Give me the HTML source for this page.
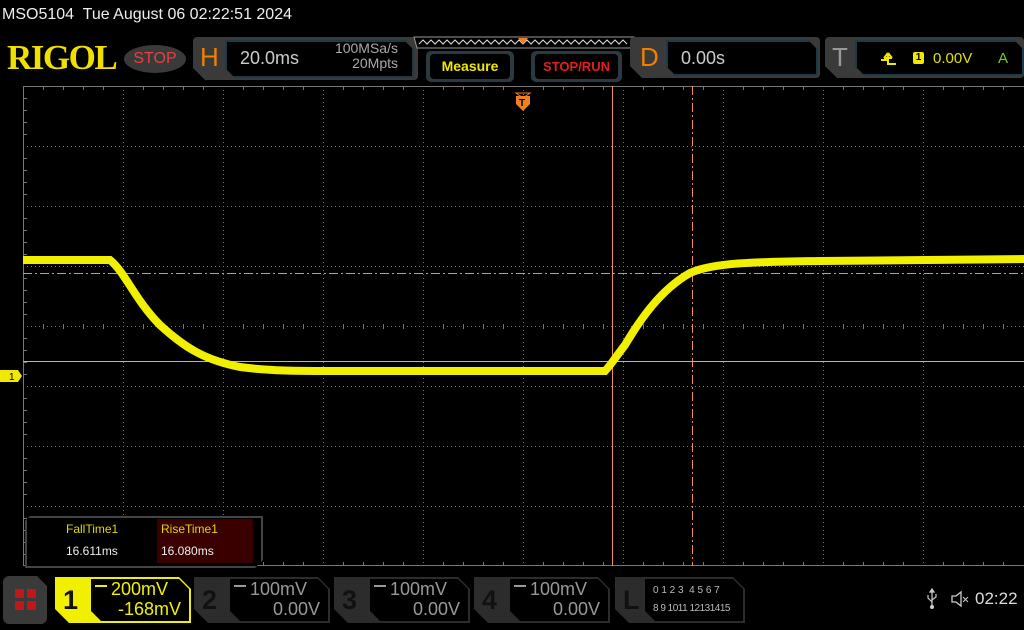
<!DOCTYPE html>
<html><head><meta charset="utf-8"><style>
body{margin:0;width:1024px;height:630px;background:#000;overflow:hidden;position:relative;font-family:"Liberation Sans","DejaVu Sans",sans-serif;color:#ddd}
.a{position:absolute}
.pan{position:absolute;background:#3a3a3a;border-radius:4px;clip-path:polygon(0 0,100% 0,100% 100%,12px 100%,0 calc(100% - 12px))}
.in{position:absolute;background:#000;border:2px solid #1d3a48;clip-path:polygon(8px 0,calc(100% - 10px) 0,100% 10px,100% 100%,10px 100%,0 calc(100% - 10px),0 0)}
.ch{position:absolute;top:577px;height:46px;width:136px;background:#2c2c2c;clip-path:polygon(0 0,calc(100% - 12px) 0,100% 12px,100% 100%,14px 100%,0 calc(100% - 14px))}
.ch .n{position:absolute;left:8px;top:8px;font-size:27px;color:#111;font-weight:bold}
.ch .b{position:absolute;left:36px;top:2px;right:2px;bottom:2px;background:#000;clip-path:polygon(0 0,calc(100% - 10px) 0,100% 10px,100% 100%,10px 100%,0 calc(100% - 10px))}
.ch .v1{position:absolute;left:36px;top:2px;font-size:18px;color:#999}
.ch .v2{position:absolute;right:10px;top:22px;font-size:18px;color:#999}
.ch .dc{position:absolute;left:4px;top:8px;width:12px;height:6px;border-top:2px solid #999}
</style></head><body>
<div class="a" style="left:2px;top:6px;font-size:16px;color:#eee">MSO5104&nbsp; Tue August 06 02:22:51 2024</div>
<div class="a" style="left:7px;top:38px;font-family:'Liberation Serif',serif;font-weight:bold;font-size:35px;color:#f0e000;letter-spacing:-1.5px">RIGOL</div>
<div class="a" style="left:124px;top:45px;width:62px;height:28px;border-radius:50%;background:#3a3a3a;color:#e84040;font-size:16px;text-align:center;line-height:28px">STOP</div>
<div class="pan" style="left:193px;top:37px;width:225px;height:43px"></div>
<div class="a" style="left:200px;top:42px;font-size:26px;color:#f08000">H</div>
<div class="in" style="left:225px;top:40px;width:185px;height:34px"></div>
<div class="a" style="left:240px;top:48px;font-size:18px;color:#ccc">20.0ms</div>
<div class="a" style="left:320px;top:41px;font-size:14px;color:#aaa;text-align:right;width:78px;line-height:15px">100MSa/s<br>20Mpts</div>
<svg class="a" style="left:413px;top:36px" width="222" height="14"><path d="M1 1H221L217 12H4Z" fill="#000" stroke="#999"/><path d="M6 8 L10 4 L14 8 L18 4 L22 8 L26 4 L30 8 L34 4 L38 8 L42 4 L46 8 L50 4 L54 8 L58 4 L62 8 L66 4 L70 8 L74 4 L78 8 L82 4 L86 8 L90 4 L94 8 L98 4 L102 8 L106 4 L110 8 L114 4 L118 8 L122 4 L126 8 L130 4 L134 8 L138 4 L142 8 L146 4 L150 8 L154 4 L158 8 L162 4 L166 8 L170 4 L174 8 L178 4 L182 8 L186 4 L190 8 L194 4 L198 8 L202 4 L206 8 L210 4 L214 8" fill="none" stroke="#ddd" stroke-width="1"/><path d="M105 2h10l-5 6z" fill="#f08020"/></svg>
<div class="a" style="left:426px;top:51px;width:88px;height:31px;background:#2a3a40;border-radius:5px"></div>
<div class="a" style="left:430px;top:54px;width:80px;height:25px;background:#000;border-radius:4px;color:#f0e800;font-weight:bold;font-size:14px;text-align:center;line-height:25px">Measure</div>
<div class="a" style="left:531px;top:51px;width:91px;height:31px;background:#2a3a40;border-radius:5px"></div>
<div class="a" style="left:535px;top:54px;width:83px;height:25px;background:#000;border-radius:4px;color:#e02020;font-weight:bold;font-size:13px;text-align:center;line-height:25px">STOP/RUN</div>
<div class="pan" style="left:630px;top:37px;width:190px;height:41px"></div>
<div class="a" style="left:640px;top:42px;font-size:26px;color:#f08000">D</div>
<div class="in" style="left:666px;top:40px;width:148px;height:32px"></div>
<div class="a" style="left:681px;top:48px;font-size:18px;color:#ccc">0.00s</div>
<div class="pan" style="left:825px;top:37px;width:199px;height:41px"></div>
<div class="a" style="left:832px;top:42px;font-size:26px;color:#999">T</div>
<div class="in" style="left:855px;top:40px;width:165px;height:32px"></div>
<svg class="a" style="left:880px;top:50px" width="18" height="16"><path d="M1 10H8V3M8 3L4 8M8 3L12 8M4 8H12M8 10V14H16" fill="none" stroke="#f0e800" stroke-width="2"/></svg>
<div class="a" style="left:913px;top:52px;width:11px;height:12px;background:#f0e800;border-radius:2px;color:#000;font-size:10px;text-align:center;line-height:12px;font-weight:bold">1</div>
<div class="a" style="left:933px;top:50px;font-size:15px;color:#e0e000">0.00V</div>
<div class="a" style="left:998px;top:50px;font-size:15px;color:#70d020">A</div>

<svg class="a" style="left:0;top:0" width="1024" height="630">
<g stroke="#777" stroke-width="1" fill="none" stroke-dasharray="1,3">
<path d="M123.5 86V566M223.5 86V566M323.5 86V566M423.5 86V566M523.5 86V566M623.5 86V566M723.5 86V566M823.5 86V566M923.5 86V566"/>
<path d="M23 146.5H1024M23 206.5H1024M23 266.5H1024M23 326.5H1024M23 386.5H1024M23 446.5H1024M23 506.5H1024"/>
</g>
<path d="M23.5 86V566M23 86.5H1024M23 565.5H1024" stroke="#777"/>
<g stroke="#777">
<path d="M43.5 324v5M63.5 324v5M83.5 324v5M103.5 324v5M143.5 324v5M163.5 324v5M183.5 324v5M203.5 324v5M243.5 324v5M263.5 324v5M283.5 324v5M303.5 324v5M343.5 324v5M363.5 324v5M383.5 324v5M403.5 324v5M443.5 324v5M463.5 324v5M483.5 324v5M503.5 324v5M543.5 324v5M563.5 324v5M583.5 324v5M603.5 324v5M643.5 324v5M663.5 324v5M683.5 324v5M703.5 324v5M743.5 324v5M763.5 324v5M783.5 324v5M803.5 324v5M843.5 324v5M863.5 324v5M883.5 324v5M903.5 324v5M943.5 324v5M963.5 324v5M983.5 324v5M1003.5 324v5"/>
<path d="M43.5 86v4M63.5 86v4M83.5 86v4M103.5 86v4M143.5 86v4M163.5 86v4M183.5 86v4M203.5 86v4M243.5 86v4M263.5 86v4M283.5 86v4M303.5 86v4M343.5 86v4M363.5 86v4M383.5 86v4M403.5 86v4M443.5 86v4M463.5 86v4M483.5 86v4M503.5 86v4M543.5 86v4M563.5 86v4M583.5 86v4M603.5 86v4M643.5 86v4M663.5 86v4M683.5 86v4M703.5 86v4M743.5 86v4M763.5 86v4M783.5 86v4M803.5 86v4M843.5 86v4M863.5 86v4M883.5 86v4M903.5 86v4M943.5 86v4M963.5 86v4M983.5 86v4M1003.5 86v4"/>
<path d="M43.5 566v-4M63.5 566v-4M83.5 566v-4M103.5 566v-4M143.5 566v-4M163.5 566v-4M183.5 566v-4M203.5 566v-4M243.5 566v-4M263.5 566v-4M283.5 566v-4M303.5 566v-4M343.5 566v-4M363.5 566v-4M383.5 566v-4M403.5 566v-4M443.5 566v-4M463.5 566v-4M483.5 566v-4M503.5 566v-4M543.5 566v-4M563.5 566v-4M583.5 566v-4M603.5 566v-4M643.5 566v-4M663.5 566v-4M683.5 566v-4M703.5 566v-4M743.5 566v-4M763.5 566v-4M783.5 566v-4M803.5 566v-4M843.5 566v-4M863.5 566v-4M883.5 566v-4M903.5 566v-4M943.5 566v-4M963.5 566v-4M983.5 566v-4M1003.5 566v-4"/>
<path d="M23 98.5h4M23 110.5h4M23 122.5h4M23 134.5h4M23 158.5h4M23 170.5h4M23 182.5h4M23 194.5h4M23 218.5h4M23 230.5h4M23 242.5h4M23 254.5h4M23 278.5h4M23 290.5h4M23 302.5h4M23 314.5h4M23 338.5h4M23 350.5h4M23 362.5h4M23 374.5h4M23 398.5h4M23 410.5h4M23 422.5h4M23 434.5h4M23 458.5h4M23 470.5h4M23 482.5h4M23 494.5h4M23 518.5h4M23 530.5h4M23 542.5h4M23 554.5h4"/>
</g>
<path d="M23 273.5H1024" stroke="#f09050" stroke-dasharray="9,3,2,3"/>
<path d="M692.5 86V566" stroke="#f09050" stroke-dasharray="9,3,2,3"/>
<path d="M23 361.5H1024" stroke="#e8a878"/>
<path d="M612.5 86V566" stroke="#f09050"/>
<path d="M23 260 L110 260 C125 272 135 300 160 325 C185 348 205 360 240 367 C270 371 300 371 330 371 L605 371 C610 366 615 358 625 345 C640 320 660 290 690 273 C715 262 760 262 820 261 L1024 259" fill="none" stroke="#f0f000" stroke-width="8"/>
<path d="M516 93h14l-7 5z" fill="none" stroke="#f08020"/>
<path d="M516 96h14v8l-7 7l-7-7z" fill="#f08020"/>
<text x="519" y="106" font-size="10" font-weight="bold" fill="#000" font-family="Liberation Sans">T</text>
<path d="M0 370h18l4 6l-4 6H0z" fill="#f0e800"/>
<text x="9" y="380" font-size="10" fill="#000" font-family="Liberation Sans">1</text>
</svg>

<div class="a" style="left:25px;top:516px;width:234px;height:48px;background:#000;border:2px solid #444;clip-path:polygon(5px 0,100% 0,100% calc(100% - 8px),calc(100% - 8px) 100%,0 100%,0 5px)"></div>
<div class="a" style="left:157px;top:519px;width:96px;height:44px;background:#3a0000"></div>
<div class="a" style="left:66px;top:522px;font-size:12px;color:#e0d800">FallTime1</div>
<div class="a" style="left:66px;top:544px;font-size:12px;color:#eee">16.611ms</div>
<div class="a" style="left:161px;top:522px;font-size:12px;color:#e0d800">RiseTime1</div>
<div class="a" style="left:161px;top:544px;font-size:12px;color:#eee">16.080ms</div>

<div class="a" style="left:3px;top:576px;width:44px;height:48px;background:#3a3a3a;border-radius:6px;clip-path:polygon(0 0,calc(100% - 10px) 0,100% 10px,100% 100%,0 100%)"></div>
<div class="a" style="left:15px;top:589px;width:9px;height:9px;background:#c01818;box-shadow:12px 0 #c01818,0 12px #c01818,12px 12px #c01818"></div>

<div class="ch" style="left:55px;background:#f0f000"><div class="n">1</div><div class="b"></div><div class="dc" style="left:40px;border-color:#f0f000"></div><div class="v1" style="left:56px;color:#f0f000">200mV</div><div class="v2" style="color:#f0f000;right:10px">-168mV</div></div>
<div class="ch" style="left:194px"><div class="n">2</div><div class="b"></div><div class="dc" style="left:40px"></div><div class="v1" style="left:56px">100mV</div><div class="v2">0.00V</div></div>
<div class="ch" style="left:334px"><div class="n">3</div><div class="b"></div><div class="dc" style="left:40px"></div><div class="v1" style="left:56px">100mV</div><div class="v2">0.00V</div></div>
<div class="ch" style="left:474px"><div class="n">4</div><div class="b"></div><div class="dc" style="left:40px"></div><div class="v1" style="left:56px">100mV</div><div class="v2">0.00V</div></div>
<div class="ch" style="left:615px;width:130px"><div class="n" style="color:#111">L</div><div class="b" style="left:30px"></div>
<div class="a" style="left:38px;top:8px;font-size:10px;color:#bbb">0 1 2 3&nbsp; 4 5 6 7</div>
<div class="a" style="left:38px;top:26px;font-size:10px;color:#bbb;letter-spacing:-0.5px">8 9 1011 12131415</div></div>

<svg class="a" style="left:926px;top:588px" width="12" height="22"><path d="M6 1V19M6 1l-2 3h4zM6 14L2 10V7M6 12l4-3V6" fill="none" stroke="#ccc" stroke-width="1.2"/><circle cx="6" cy="19" r="2" fill="#ccc"/></svg>
<svg class="a" style="left:950px;top:590px" width="20" height="18"><path d="M2 6h4l5-4v14l-5-4H2z" fill="none" stroke="#ccc" stroke-width="1.3"/><path d="M13 7l5 5M18 7l-5 5" stroke="#ccc"/></svg>
<div class="a" style="left:975px;top:589px;font-size:17px;color:#ddd">02:22</div>
</body></html>
